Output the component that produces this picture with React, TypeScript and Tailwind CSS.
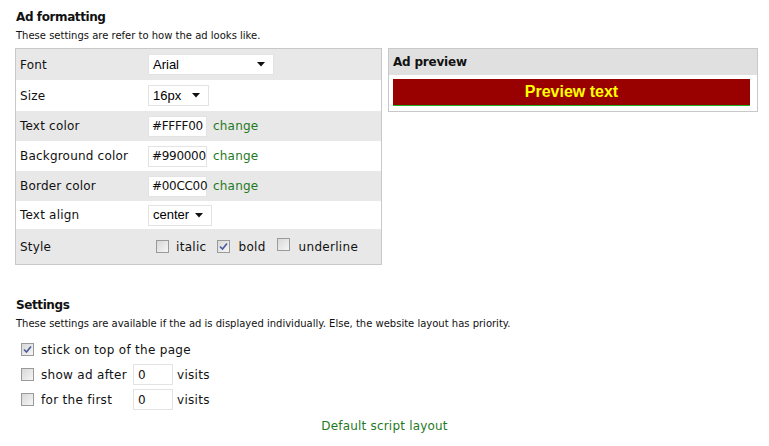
import React from "react";

const font = { fontFamily: "Tahoma, 'DejaVu Sans', sans-serif" };

const Check = ({ checked }: { checked?: boolean }) => (
  <span className="inline-flex h-[13px] w-[13px] shrink-0 items-center justify-center border border-[#9a9a9a] bg-gradient-to-br from-[#d8d8d8] to-[#f6f6f6]">
    {checked && (
      <svg width="9" height="9" viewBox="0 0 9 9">
        <path d="M1 4.5 L3.5 7 L8 1.5" fill="none" stroke="#4b5a9e" strokeWidth="1.6" />
      </svg>
    )}
  </span>
);

const Arrow = () => (
  <svg width="8" height="5" viewBox="0 0 8 5" className="shrink-0">
    <path d="M0 0 H8 L4 4.5 Z" fill="#111" />
  </svg>
);

const Select = ({ value, width }: { value: string; width: string }) => (
  <div className={`flex h-[21px] items-center justify-between border border-[#e3e3e3] bg-white pl-[4px] pr-[8px] ${width}`}>
    <span className="text-[13px] text-black" style={{ fontFamily: "'Liberation Sans', Arial, sans-serif" }}>
      {value}
    </span>
    <Arrow />
  </div>
);

const ColorField = ({ value }: { value: string }) => (
  <div className="flex items-center gap-[6px]">
    <div className="flex h-[21px] w-[59px] items-center border border-[#e3e3e3] bg-white pl-[3px] text-[12px] tracking-[-0.3px]">
      {value}
    </div>
    <span className="text-[12px] tracking-[0.2px] text-[#1f7a1f]">change</span>
  </div>
);

const Row = ({ label, gray, h, children }: { label: string; gray?: boolean; h: string; children: React.ReactNode }) => (
  <div className={`flex items-center ${h} ${gray ? "bg-[#e8e8e8]" : "bg-white"}`}>
    <div className="w-[132px] pl-[4px] text-[12px] tracking-[0.2px]">{label}</div>
    <div className="flex items-center">{children}</div>
  </div>
);

export default function App() {
  return (
    <div className="h-[446px] w-[769px] bg-white text-[#111]" style={font}>
      <div className="px-[16px] pt-[8px]">
        <h2 className="text-[12px] font-bold tracking-[-0.4px]">Ad formatting</h2>
        <p className="mt-[2px] text-[10px]">These settings are refer to how the ad looks like.</p>
      </div>

      <div className="mt-[5px] flex items-start gap-[6px] pl-[15px]">
        <div className="w-[367px] border border-[#c8c8c8]">
          <Row label="Font" gray h="h-[31px]">
            <Select value="Arial" width="w-[126px]" />
          </Row>
          <Row label="Size" h="h-[31px]">
            <Select value="16px" width="w-[61px]" />
          </Row>
          <Row label="Text color" gray h="h-[30px]">
            <ColorField value="#FFFF00" />
          </Row>
          <Row label="Background color" h="h-[30px]">
            <ColorField value="#990000" />
          </Row>
          <Row label="Border color" gray h="h-[30px]">
            <ColorField value="#00CC00" />
          </Row>
          <Row label="Text align" h="h-[28px]">
            <Select value="center" width="w-[64px]" />
          </Row>
          <Row label="Style" gray h="h-[35px]">
            <div className="flex items-center pl-[8px] text-[12px] tracking-[0.3px]">
              <Check />
              <span className="ml-[7px]">italic</span>
              <span className="ml-[11px]"><Check checked /></span>
              <span className="ml-[8px]">bold</span>
              <span className="ml-[11px]"><Check /></span>
              <span className="ml-[9px]">underline</span>
            </div>
          </Row>
        </div>

        <div className="w-[370px] border border-[#c8c8c8]">
          <div className="flex h-[26px] items-center bg-[#e0e0e0] pl-[4px] text-[12px] font-bold tracking-[-0.2px]">Ad preview</div>
          <div className="pb-[5px] pl-[4px] pr-[7px] pt-[4px]">
            <div
              className="flex h-[27px] items-center justify-center border-b border-[#22b022] bg-[#990000] text-[16px] font-bold text-[#ffff00]"
              style={{ fontFamily: "'Liberation Sans', Arial, sans-serif" }}
            >
              Preview text
            </div>
          </div>
        </div>
      </div>

      <div className="mt-[31px] px-[16px]">
        <h2 className="text-[12px] font-bold tracking-[-0.4px]">Settings</h2>
        <p className="mt-[2px] text-[10px]">
          These settings are available if the ad is displayed individually. Else, the website layout has priority.
        </p>
      </div>

      <div className="mt-[8px] flex flex-col gap-[4px] pl-[21px] text-[12px] tracking-[0.3px]">
        <div className="flex h-[21px] items-center gap-[7px]">
          <Check checked />
          <span>stick on top of the page</span>
        </div>
        <div className="flex h-[21px] items-center">
          <Check />
          <span className="ml-[7px] w-[92px]">show ad after</span>
          <div className="flex h-[21px] w-[40px] items-center border border-[#e3e3e3] pl-[4px]">0</div>
          <span className="ml-[4px]">visits</span>
        </div>
        <div className="flex h-[21px] items-center">
          <Check />
          <span className="ml-[7px] w-[92px]">for the first</span>
          <div className="flex h-[21px] w-[40px] items-center border border-[#e3e3e3] pl-[4px]">0</div>
          <span className="ml-[4px]">visits</span>
        </div>
      </div>

      <div className="mt-[7px] text-center text-[12px] tracking-[0.2px] text-[#1f7a1f]">Default script layout</div>
    </div>
  );
}
